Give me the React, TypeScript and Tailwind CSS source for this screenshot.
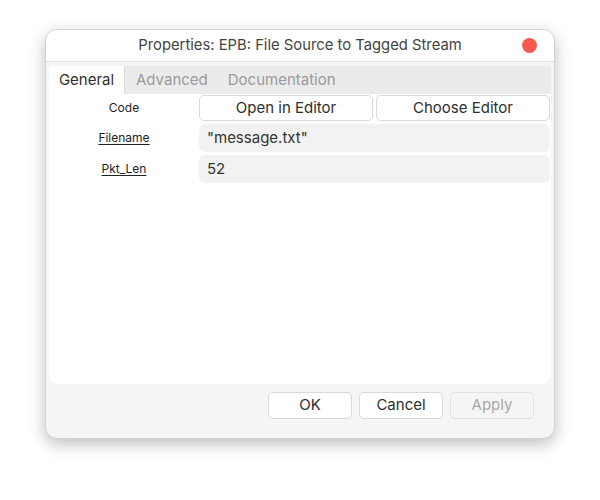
export default function App() {
  return (
    <div className="w-[600px] h-[500px] bg-white pt-[29px] pl-[45px]" style={{ fontFamily: "Inter, 'Noto Sans', sans-serif" }}>
      <div className="w-[510px] h-[410px] rounded-[12px] bg-[#f5f5f5] shadow-[0_5px_16px_rgba(0,0,0,0.26)] border border-[#d4d4d4] overflow-hidden flex flex-col">
        {/* Title bar */}
        <div className="h-[32px] bg-white border-b border-[#e2e2e2] relative flex items-center justify-center shrink-0">
          <span className="text-[14.8px] text-[#444]">Properties: EPB: File Source to Tagged Stream</span>
          <span className="absolute right-[17px] top-[8px] w-[15px] h-[15px] rounded-full bg-[#f6574f]" />
        </div>

        <div className="flex-1 flex flex-col px-[3px] pt-[4px]">
          {/* Tabs */}
          <div className="h-[28px] bg-[#ebebeb] flex items-stretch text-[15px] shrink-0">
            <div className="bg-white w-[76px] flex items-center justify-center text-[#2e2e2e] border-r border-[#dcdcdc]">General</div>
            <div className="pl-[11px] pr-[10px] flex items-center text-[#9a9a9a]">Advanced</div>
            <div className="px-[10px] flex items-center text-[#9a9a9a]">Documentation</div>
          </div>

          {/* Panel */}
          <div className="h-[290px] bg-white rounded-b-[9px] pt-[1px] pr-[1px] flex flex-col gap-[3px]">
            <div className="flex items-center h-[26px]">
              <div className="w-[150px] text-center text-[12px] text-[#222]">Code</div>
              <div className="flex-1 flex gap-[3px]">
                <button className="flex-1 h-[26px] rounded-[5px] border border-[#d9d9d9] bg-white text-[15px] text-[#2e2e2e]">Open in Editor</button>
                <button className="flex-1 h-[26px] rounded-[5px] border border-[#d9d9d9] bg-white text-[15px] text-[#2e2e2e]">Choose Editor</button>
              </div>
            </div>
            <div className="flex items-center h-[28px]">
              <div className="w-[150px] text-center text-[12px] text-[#222] underline underline-offset-2">Filename</div>
              <div className="flex-1 h-[28px] rounded-[6px] bg-[#f2f2f2] flex items-center px-[8px] text-[15px] text-[#333]">"message.txt"</div>
            </div>
            <div className="flex items-center h-[28px]">
              <div className="w-[150px] text-center text-[12px] text-[#222] underline underline-offset-2">Pkt_Len</div>
              <div className="flex-1 h-[28px] rounded-[6px] bg-[#f2f2f2] flex items-center px-[8px] text-[15px] text-[#333]">52</div>
            </div>
          </div>

          {/* Buttons */}
          <div className="flex justify-end gap-[7px] mt-[8px] pr-[17px]">
            <button className="w-[84px] h-[27px] rounded-[5px] border border-[#d9d9d9] bg-white text-[15px] text-[#2e2e2e]">OK</button>
            <button className="w-[84px] h-[27px] rounded-[5px] border border-[#d9d9d9] bg-white text-[15px] text-[#2e2e2e]">Cancel</button>
            <button className="w-[84px] h-[27px] rounded-[5px] border border-[#e2e2e2] bg-[#f5f5f5] text-[15px] text-[#a8a8a8]">Apply</button>
          </div>
        </div>
      </div>
    </div>
  );
}
